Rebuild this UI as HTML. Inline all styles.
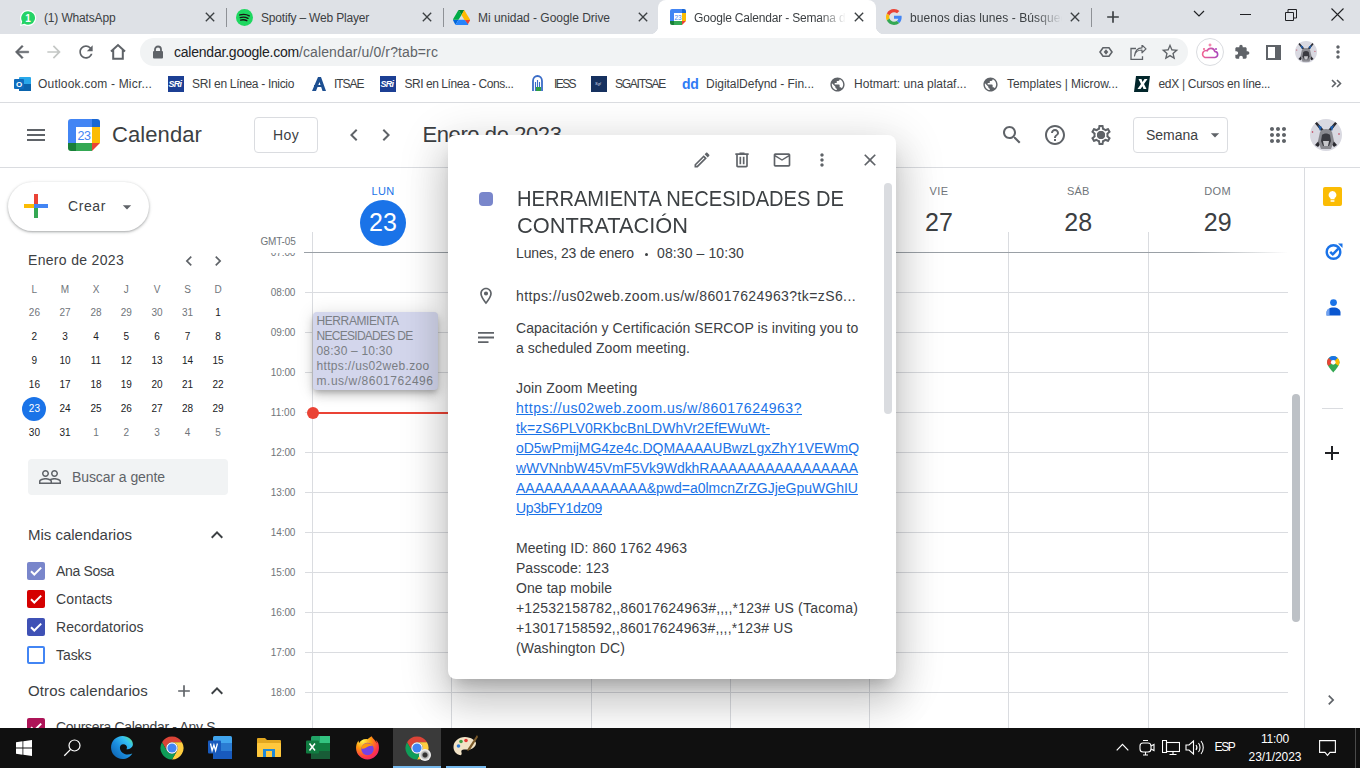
<!DOCTYPE html>
<html><head><meta charset="utf-8">
<style>
*{box-sizing:border-box;margin:0;padding:0}
html,body{width:1360px;height:768px;overflow:hidden;background:#fff;font-family:"Liberation Sans",sans-serif;color:#3c4043}
.a{position:absolute}
.t{position:absolute;line-height:1;white-space:nowrap}
svg.a{display:block}
</style></head><body>
<div class="a" style="left:0px;top:0px;width:1360px;height:34px;background:#dee1e6"></div>
<div class="a" style="left:650px;top:0;width:234px;height:34px;overflow:hidden"><div class="a" style="left:8px;top:0;width:218px;height:34px;background:#fff;border-radius:8px 8px 0 0"></div><div class="a" style="left:0;top:26px;width:8px;height:8px;background:radial-gradient(circle at 0 0,transparent 8px,#fff 8.5px)"></div><div class="a" style="left:226px;top:26px;width:8px;height:8px;background:radial-gradient(circle at 8px 0,transparent 8px,#fff 8.5px)"></div></div>
<div class="a" style="left:225.5px;top:8px;width:1px;height:19px;background:#8e9196"></div>
<div class="a" style="left:442.5px;top:8px;width:1px;height:19px;background:#8e9196"></div>
<div class="a" style="left:1090.5px;top:8px;width:1px;height:19px;background:#8e9196"></div>
<svg class="a" style="left:19px;top:9px" width="18" height="18" viewBox="0 0 18 18"><path fill="#fff" d="M9 1a8 8 0 0 0-6.9 12L1 17l4.1-1.1A8 8 0 1 0 9 1z"/><path fill="#25d366" d="M9 2.2a6.8 6.8 0 0 0-5.8 10.3l-.8 3 3.1-.8A6.8 6.8 0 1 0 9 2.2z"/><text x="9" y="13" font-size="10" font-weight="700" fill="#fff" text-anchor="middle" font-family="Liberation Sans">1</text></svg>
<svg class="a" style="left:236px;top:9px" width="17" height="17" viewBox="0 0 16 16"><circle cx="8" cy="8" r="8" fill="#1ed760"/><path d="M3.6 5.6c3-.9 6.3-.6 8.9.8M4 8.1c2.5-.7 5.2-.4 7.3.7M4.4 10.4c2-.5 4.1-.3 5.8.6" stroke="#191414" stroke-width="1.3" fill="none" stroke-linecap="round"/></svg>
<svg class="a" style="left:453px;top:10px" width="17" height="15" viewBox="0 0 17 15"><path fill="#0066da" d="M1.3 12.8l.7 1.3c.2.3.4.5.6.7L5.5 9.7H0c0 .4.1.7.3 1z"/><path fill="#00ac47" d="M8.5 5L5.6 0c-.3.2-.5.4-.6.7L.3 8.7C.1 9 0 9.3 0 9.7h5.5z"/><path fill="#ea4335" d="M14.4 14.8c.3-.2.5-.4.6-.7l.3-.6 1.6-2.7c.2-.3.3-.7.3-1h-5.5l1.2 2.3z"/><path fill="#00832d" d="M8.5 5L11.4 0c-.3-.2-.6-.2-1-.2H6.6c-.4 0-.7.1-1 .2z"/><path fill="#2684fc" d="M11.5 9.7h-6l-2.9 5c.3.2.6.2 1 .2h10.8c.4 0 .7-.1 1-.2z"/><path fill="#ffba00" d="M14.4 5.3l-2.7-4.6c-.2-.3-.4-.5-.6-.7L8.5 5l3 5h5.5c0-.4-.1-.7-.3-1z"/></svg>
<svg class="a" style="left:670px;top:9px" width="16" height="16" viewBox="0 0 16 16"><path fill="#4285f4" d="M0 2a2 2 0 0 1 2-2h10v4H4v8H0z"/><path fill="#1967d2" d="M12 0h2a2 2 0 0 1 2 2v2h-4z"/><path fill="#fbbc04" d="M12 4h4v8h-4z"/><path fill="#34a853" d="M4 12h8v4H4z"/><path fill="#188038" d="M0 12h4v4H2a2 2 0 0 1-2-2z"/><path fill="#ea4335" d="M12 12h4l-4 4z"/><rect x="4" y="4" width="8" height="8" fill="#fff"/><text x="8" y="10.6" font-size="6.5" fill="#4285f4" text-anchor="middle" font-family="Liberation Sans">23</text></svg>
<svg class="a" style="left:886px;top:9px" width="16" height="16" viewBox="0 0 48 48"><path fill="#EA4335" d="M24 9.5c3.54 0 6.71 1.22 9.21 3.6l6.85-6.85C35.9 2.38 30.47 0 24 0 14.62 0 6.51 5.38 2.56 13.22l7.98 6.19C12.43 13.72 17.74 9.5 24 9.5z"/><path fill="#4285F4" d="M46.98 24.55c0-1.57-.15-3.09-.38-4.55H24v9.02h12.94c-.58 2.96-2.26 5.48-4.78 7.18l7.73 6c4.51-4.18 7.09-10.36 7.09-17.65z"/><path fill="#FBBC05" d="M10.53 28.59c-.48-1.45-.76-2.99-.76-4.59s.27-3.14.76-4.59l-7.98-6.19C.92 16.46 0 20.12 0 24c0 3.88.92 7.54 2.56 10.78l7.97-6.19z"/><path fill="#34A853" d="M24 48c6.48 0 11.93-2.13 15.89-5.81l-7.73-6c-2.15 1.45-4.92 2.3-8.16 2.3-6.26 0-11.57-4.22-13.47-9.91l-7.98 6.19C6.51 42.62 14.62 48 24 48z"/></svg>
<div class="t" style="left:44.00px;top:11.54px;font-size:12px;color:#3c4043;letter-spacing:-0.155px;">(1) WhatsApp</div>
<div class="t" style="left:261.00px;top:11.54px;font-size:12px;color:#3c4043;letter-spacing:-0.192px;">Spotify – Web Player</div>
<div class="t" style="left:478.00px;top:11.54px;font-size:12px;color:#3c4043;letter-spacing:-0.030px;">Mi unidad - Google Drive</div>
<div class="a" style="left:694px;top:8px;width:152px;height:20px;overflow:hidden;-webkit-mask-image:linear-gradient(90deg,#000 125px,transparent 152px)">
<div class="t" style="left:0.00px;top:3.54px;font-size:12px;color:#3c4043;letter-spacing:-0.177px;">Google Calendar - Semana de</div>
</div>
<div class="a" style="left:910px;top:8px;width:152px;height:20px;overflow:hidden;-webkit-mask-image:linear-gradient(90deg,#000 125px,transparent 152px)">
<div class="t" style="left:0.00px;top:3.54px;font-size:12px;color:#3c4043;letter-spacing:0.091px;">buenos dias lunes - Búsqueda</div>
</div>
<svg class="a" style="left:202.0px;top:9.0px;" width="16" height="16" viewBox="0 0 24 24"><path fill="#3c4043" d="M19 6.41L17.59 5 12 10.59 6.41 5 5 6.41 10.59 12 5 17.59 6.41 19 12 13.41 17.59 19 19 17.59 13.41 12z"/></svg>
<svg class="a" style="left:418.5px;top:9.0px;" width="16" height="16" viewBox="0 0 24 24"><path fill="#3c4043" d="M19 6.41L17.59 5 12 10.59 6.41 5 5 6.41 10.59 12 5 17.59 6.41 19 12 13.41 17.59 19 19 17.59 13.41 12z"/></svg>
<svg class="a" style="left:635.0px;top:9.0px;" width="16" height="16" viewBox="0 0 24 24"><path fill="#3c4043" d="M19 6.41L17.59 5 12 10.59 6.41 5 5 6.41 10.59 12 5 17.59 6.41 19 12 13.41 17.59 19 19 17.59 13.41 12z"/></svg>
<svg class="a" style="left:850.5px;top:9.0px;" width="16" height="16" viewBox="0 0 24 24"><path fill="#3c4043" d="M19 6.41L17.59 5 12 10.59 6.41 5 5 6.41 10.59 12 5 17.59 6.41 19 12 13.41 17.59 19 19 17.59 13.41 12z"/></svg>
<svg class="a" style="left:1067.0px;top:9.0px;" width="16" height="16" viewBox="0 0 24 24"><path fill="#3c4043" d="M19 6.41L17.59 5 12 10.59 6.41 5 5 6.41 10.59 12 5 17.59 6.41 19 12 13.41 17.59 19 19 17.59 13.41 12z"/></svg>
<svg class="a" style="left:1103.0px;top:7.0px;" width="20" height="20" viewBox="0 0 24 24"><path fill="#3c4043" d="M19 13h-6v6h-2v-6H5v-2h6V5h2v6h6v2z"/></svg>
<svg class="a" style="left:1193px;top:10px" width="12" height="8" viewBox="0 0 12 8"><path d="M1 1l5 5 5-5" stroke="#202124" stroke-width="1.2" fill="none"/></svg>
<div class="a" style="left:1240px;top:14px;width:11px;height:1px;background:#202124"></div>
<svg class="a" style="left:1285px;top:9px" width="12" height="12" viewBox="0 0 12 12"><path d="M.5 3.5h8v8h-8zM3 3.5V.5h8.5V9H8.5" stroke="#202124" stroke-width="1" fill="none"/></svg>
<svg class="a" style="left:1331px;top:8px" width="13" height="13" viewBox="0 0 13 13"><path d="M.5.5l12 12M12.5.5l-12 12" stroke="#202124" stroke-width="1.1" fill="none"/></svg>
<div class="a" style="left:0px;top:34px;width:1360px;height:34px;background:#fff"></div>
<svg class="a" style="left:12.0px;top:42.0px;overflow:visible" width="20" height="20" viewBox="0 0 24 24"><path stroke="#5f6368" stroke-width=".6" fill="#5f6368" d="M20 11H7.83l5.59-5.59L12 4l-8 8 8 8 1.41-1.41L7.83 13H20v-2z"/></svg>
<svg class="a" style="left:44.0px;top:42.0px;" width="20" height="20" viewBox="0 0 24 24"><path fill="#c4c7c5" d="M12 4l-1.41 1.41L16.17 11H4v2h12.17l-5.58 5.59L12 20l8-8z"/></svg>
<svg class="a" style="left:76.0px;top:42.0px;" width="20" height="20" viewBox="0 0 24 24"><path fill="#5f6368" d="M17.65 6.35C16.2 4.9 14.21 4 12 4c-4.42 0-7.99 3.58-7.99 8s3.57 8 7.99 8c3.73 0 6.84-2.55 7.73-6h-2.08c-.82 2.33-3.04 4-5.65 4-3.31 0-6-2.69-6-6s2.69-6 6-6c1.66 0 3.14.69 4.22 1.78L13 11h7V4l-2.35 2.35z"/></svg>
<svg class="a" style="left:109px;top:43px" width="18" height="18" viewBox="0 0 18 18"><path d="M2 8.6L9 2l7 6.6M4.2 6.8v9h9.6v-9" stroke="#5f6368" stroke-width="2" fill="none" stroke-linejoin="miter"/></svg>
<div class="a" style="left:140px;top:38px;width:1048px;height:28px;background:#f1f3f4;border-radius:14px"></div>
<svg class="a" style="left:152px;top:45px" width="12" height="14" viewBox="0 0 12 14"><path d="M3 6V4.5a3 3 0 0 1 6 0V6" stroke="#5f6368" stroke-width="1.8" fill="none"/><rect x="1" y="6" width="10" height="7.5" rx="1" fill="#5f6368"/></svg>
<div class="a" style="left:174px;top:0">
<div class="t" style="left:0.00px;top:45.15px;font-size:14px;color:#202124;letter-spacing:-0.221px;">calendar.google.com</div>
<div class="t" style="left:125.00px;top:45.15px;font-size:14px;color:#5f6368;letter-spacing:0.110px;">/calendar/u/0/r?tab=rc</div>
</div>
<svg class="a" style="left:1099px;top:47px" width="14" height="10" viewBox="0 0 14 10"><path d="M4 .8h6L13 5l-3 4.2H4L1 5z" stroke="#5f6368" stroke-width="1.6" fill="none"/><path d="M7 2.2L9.3 5 7 7.8 4.7 5z" fill="#5f6368"/></svg>
<svg class="a" style="left:1130px;top:45px" width="17" height="15" viewBox="0 0 17 15"><path d="M6 3.5H1v10.8h11.5v-3" stroke="#5f6368" stroke-width="1.3" fill="none"/><path d="M4.5 11c.6-3.8 3.3-6 7.5-6v2.8l4-3.9-4-3.9v2.8C7.8 2.8 5 6 4.5 11z" stroke="#5f6368" stroke-width="1.2" fill="none" stroke-linejoin="round"/></svg>
<svg class="a" style="left:1160.0px;top:42.0px;" width="20" height="20" viewBox="0 0 24 24"><path fill="#5f6368" d="M22 9.24l-7.19-.62L12 2 9.19 8.63 2 9.24l5.46 4.73L5.82 21 12 17.27 18.18 21l-1.63-7.03L22 9.24zM12 15.4l-3.76 2.27 1-4.28-3.32-2.88 4.38-.38L12 6.1l1.71 4.04 4.38.38-3.32 2.88 1 4.28L12 15.4z"/></svg>
<div class="a" style="left:1196px;top:38px;width:28px;height:28px;border-radius:50%;border:1px solid #dadce0;background:#fff"></div>
<svg class="a" style="left:1201px;top:43px" width="18" height="18" viewBox="0 0 18 18"><defs><linearGradient id="pg" x1="0" x2="1"><stop offset="0" stop-color="#f06292"/><stop offset="1" stop-color="#ab47bc"/></linearGradient></defs><path d="M4 14.5h9.5a3 3 0 0 0 .3-6 4 4 0 0 0-7.6-.7A3.4 3.4 0 0 0 4 14.5z" stroke="url(#pg)" stroke-width="1.6" fill="none"/><circle cx="9" cy="2" r="1" stroke="#f06292" fill="none"/><circle cx="3" cy="6" r="1" fill="#f06292"/><circle cx="15" cy="6" r="1" fill="#ab47bc"/></svg>
<svg class="a" style="left:1234.0px;top:44.0px;" width="16" height="16" viewBox="0 0 24 24"><path fill="#5f6368" d="M20.5 11H19V7c0-1.1-.9-2-2-2h-4V3.5C13 2.12 11.88 1 10.5 1S8 2.12 8 3.5V5H4c-1.1 0-1.99.9-1.99 2v3.8H3.5c1.49 0 2.7 1.21 2.7 2.7s-1.21 2.7-2.7 2.7H2V20c0 1.1.9 2 2 2h3.8v-1.5c0-1.49 1.21-2.7 2.7-2.7 1.49 0 2.7 1.21 2.7 2.7V22H17c1.1 0 2-.9 2-2v-4h1.5c1.38 0 2.5-1.12 2.5-2.5S21.88 11 20.5 11z"/></svg>
<svg class="a" style="left:1266px;top:45px" width="15" height="15" viewBox="0 0 15 15"><rect x="1" y="1" width="13" height="13" stroke="#5f6368" stroke-width="2" fill="none"/><rect x="9" y="1" width="5" height="13" fill="#5f6368"/></svg>
<svg class="a" style="left:1295px;top:41px" width="22" height="22" viewBox="0 0 32 32"><defs><clipPath id="avc1295"><circle cx="16" cy="16" r="16"/></clipPath></defs><g clip-path="url(#avc1295)"><rect width="32" height="32" fill="#d9d9e1"/><path d="M3 2l3 0 21 24-3 2zM29 2l-3 0-21 24 3 2z" fill="#2a2a30"/><path d="M8 6l4 2-2 4zM24 6l-4 2 2 4z" fill="#1f5fb0"/><path d="M10 13c2-4 10-4 12 0l2 9-3 8h-10l-3-8z" fill="#8a8a90"/><path d="M12 16c2-2 6-2 8 0l1 6-2 5h-6l-2-5z" fill="#3a3a40"/><path d="M13 22h6l-1 5h-4z" fill="#c8c8cc"/><circle cx="2.5" cy="13" r=".8" fill="#c0304a"/><circle cx="29" cy="15" r=".8" fill="#c0304a"/></g></svg>
<svg class="a" style="left:1328.0px;top:42.0px;" width="20" height="20" viewBox="0 0 24 24"><path fill="#5f6368" d="M12 8c1.1 0 2-.9 2-2s-.9-2-2-2-2 .9-2 2 .9 2 2 2zm0 2c-1.1 0-2 .9-2 2s.9 2 2 2 2-.9 2-2-.9-2-2-2zm0 6c-1.1 0-2 .9-2 2s.9 2 2 2 2-.9 2-2-.9-2-2-2z"/></svg>
<div class="a" style="left:0px;top:68px;width:1360px;height:34px;background:#fff"></div>
<div class="a" style="left:0px;top:102px;width:1360px;height:1px;background:#dadce0"></div>
<svg class="a" style="left:14px;top:76px" width="17" height="16" viewBox="0 0 17 16"><rect x="5" y="1" width="12" height="14" rx="1" fill="#28a8ea"/><rect x="5" y="8" width="12" height="7" fill="#0a64ad"/><rect x="0" y="3" width="10" height="10" rx="1" fill="#0f6cbd"/><text x="5" y="11.3" font-size="8" font-weight="700" fill="#fff" text-anchor="middle" font-family="Liberation Sans">O</text></svg>
<div class="t" style="left:38.00px;top:77.84px;font-size:12px;color:#3c4043;letter-spacing:0.189px;">Outlook.com - Micr...</div>
<div class="a" style="left:168px;top:76px;width:16px;height:16px;background:#1c3f94"></div><div class="t" style="left:168.5px;top:79.5px;font-size:9px;font-weight:700;font-style:italic;color:#fff;letter-spacing:-.8px">SRi</div>
<div class="t" style="left:192.00px;top:77.84px;font-size:12px;color:#3c4043;letter-spacing:-0.320px;">SRI en Línea - Inicio</div>
<svg class="a" style="left:311px;top:76px" width="16" height="16" viewBox="0 0 16 16"><path d="M1 15L7 1h3l5 14h-3.5L8.5 6 5 15z" fill="#1d4f91"/><path d="M3 10h9" stroke="#1d4f91" stroke-width="2"/></svg>
<div class="t" style="left:334.00px;top:77.84px;font-size:12px;color:#3c4043;letter-spacing:-1.035px;">ITSAE</div>
<div class="a" style="left:380px;top:76px;width:16px;height:16px;background:#1c3f94"></div><div class="t" style="left:380.5px;top:79.5px;font-size:9px;font-weight:700;font-style:italic;color:#fff;letter-spacing:-.8px">SRi</div>
<div class="t" style="left:404.40px;top:77.84px;font-size:12px;color:#3c4043;letter-spacing:-0.442px;">SRI en Línea - Cons...</div>
<svg class="a" style="left:530px;top:75px" width="15" height="17" viewBox="0 0 15 17"><path d="M3 16V6c0-3 2-5 4.5-5S12 3 12 6v10" stroke="#3a6cc7" stroke-width="1.8" fill="none"/><path d="M5.5 16V7M7.5 16V5M9.5 16V7" stroke="#3a6cc7" stroke-width="1.1"/><rect x="6" y="12" width="5" height="4" fill="#2e9e44"/></svg>
<div class="t" style="left:554.00px;top:77.84px;font-size:12px;color:#3c4043;letter-spacing:-1.586px;">IESS</div>
<div class="a" style="left:591px;top:76px;width:16px;height:16px;background:#16315f"></div>
<div class="t" style="left:595px;top:82px;font-size:4px;color:#cfd8e8;font-style:italic">Sgl</div>
<div class="t" style="left:615.00px;top:77.84px;font-size:12px;color:#3c4043;letter-spacing:-1.252px;">SGAITSAE</div>
<div class="t" style="left:682px;top:77px;font-size:14px;font-weight:700;color:#2f7bf5;letter-spacing:-.3px">dd</div>
<div class="t" style="left:706.00px;top:77.84px;font-size:12px;color:#3c4043;letter-spacing:-0.032px;">DigitalDefynd - Fin...</div>
<svg class="a" style="left:829.0px;top:75.5px;" width="17" height="17" viewBox="0 0 24 24"><path fill="#5f6368" d="M12 2C6.48 2 2 6.48 2 12s4.48 10 10 10 10-4.480 10-10S17.52 2 12 2zm-1 17.93c-3.95-.49-7-3.85-7-7.93 0-.62.08-1.21.21-1.79L9 15v1c0 1.1.9 2 2 2v1.93zm6.9-2.54c-.26-.81-1-1.39-1.9-1.39h-1v-3c0-.55-.45-1-1-1H8v-2h2c.55 0 1-.45 1-1V7h2c1.1 0 2-.9 2-2v-.41c2.93 1.19 5 4.06 5 7.41 0 2.08-.8 3.97-2.1 5.39z"/></svg>
<div class="t" style="left:854.00px;top:77.84px;font-size:12px;color:#3c4043;letter-spacing:0.020px;">Hotmart: una plataf...</div>
<svg class="a" style="left:982.0px;top:75.5px;" width="17" height="17" viewBox="0 0 24 24"><path fill="#5f6368" d="M12 2C6.48 2 2 6.48 2 12s4.48 10 10 10 10-4.480 10-10S17.52 2 12 2zm-1 17.93c-3.95-.49-7-3.85-7-7.93 0-.62.08-1.21.21-1.79L9 15v1c0 1.1.9 2 2 2v1.93zm6.9-2.54c-.26-.81-1-1.39-1.9-1.39h-1v-3c0-.55-.45-1-1-1H8v-2h2c.55 0 1-.45 1-1V7h2c1.1 0 2-.9 2-2v-.41c2.93 1.19 5 4.06 5 7.41 0 2.08-.8 3.97-2.1 5.39z"/></svg>
<div class="t" style="left:1007.00px;top:77.84px;font-size:12px;color:#3c4043;letter-spacing:-0.039px;">Templates | Microw...</div>
<svg class="a" style="left:1134px;top:76px" width="16" height="16" viewBox="0 0 16 16"><path d="M2 0h14l-2 16H0z" fill="#02262b"/><path d="M4.5 3h3l1 3 2-3h3l-3.5 5 2.5 5h-3l-1-2.8L6.5 13h-3L7 8z" fill="#fff"/></svg>
<div class="t" style="left:1158.50px;top:77.84px;font-size:12px;color:#3c4043;letter-spacing:-0.305px;">edX | Cursos en líne...</div>
<svg class="a" style="left:1331px;top:79px" width="11" height="9" viewBox="0 0 11 9"><path d="M1 1l3.5 3.5L1 8M6 1l3.5 3.5L6 8" stroke="#5f6368" stroke-width="1.6" fill="none"/></svg>
<div class="a" style="left:0;top:103px;width:1360px;height:625px;overflow:hidden"><div class="a" style="left:0;top:-103px;width:1360px;height:768px">
<div class="a" style="left:0px;top:167px;width:1360px;height:1px;background:#dadce0"></div>
<svg class="a" style="left:24.0px;top:123.0px;" width="24" height="24" viewBox="0 0 24 24"><path fill="#5f6368" d="M3 18h18v-2H3v2zm0-5h18v-2H3v2zm0-7v2h18V6H3z"/></svg>
<svg class="a" style="left:68px;top:119px" width="32" height="32" viewBox="0 0 32 32"><path fill="#4285f4" d="M0 3a3 3 0 0 1 3-3h21v8H8v16H0z"/><path fill="#1967d2" d="M24 0h5a3 3 0 0 1 3 3v5h-8z"/><path fill="#fbbc04" d="M24 8h8v16h-8z"/><path fill="#34a853" d="M8 24h16v8H8z"/><path fill="#188038" d="M0 24h8v8H3a3 3 0 0 1-3-3z"/><path fill="#ea4335" d="M24 24h8l-8 8z"/><rect x="8" y="8" width="16" height="16" fill="#fff"/><text x="16" y="21" font-size="12.5" fill="#4285f4" text-anchor="middle" font-family="Liberation Sans" letter-spacing="-.5">23</text></svg>
<div class="t" style="left:112.00px;top:124.38px;font-size:22px;color:#3c4043;letter-spacing:0.090px;">Calendar</div>
<div class="a" style="left:254px;top:117px;width:64px;height:36px;border:1px solid #dadce0;border-radius:4px;background:#fff"></div>
<div class="t" style="left:273.00px;top:128.15px;font-size:14px;color:#3c4043;letter-spacing:0.368px;">Hoy</div>
<svg class="a" style="left:342.0px;top:123.0px;" width="24" height="24" viewBox="0 0 24 24"><path fill="#5f6368" d="M15.41 7.41L14 6l-6 6 6 6 1.41-1.41L10.83 12z"/></svg>
<svg class="a" style="left:374.0px;top:123.0px;" width="24" height="24" viewBox="0 0 24 24"><path fill="#5f6368" d="M10 6L8.59 7.41 13.17 12l-4.58 4.59L10 18l6-6z"/></svg>
<div class="t" style="left:422.50px;top:123.88px;font-size:22px;color:#3c4043;letter-spacing:-0.411px;">Enero de 2023</div>
<svg class="a" style="left:1000.0px;top:123.0px;" width="24" height="24" viewBox="0 0 24 24"><path fill="#5f6368" d="M15.5 14h-.79l-.28-.27C15.41 12.59 16 11.11 16 9.5 16 5.91 13.09 3 9.5 3S3 5.91 3 9.5 5.91 16 9.5 16c1.61 0 3.090-.59 4.23-1.57l.27.28v.79l5 4.99L20.49 19l-4.99-5zm-6 0C7.01 14 5 11.99 5 9.5S7.01 5 9.5 5 14 7.01 14 9.5 11.99 14 9.5 14z"/></svg>
<svg class="a" style="left:1043.0px;top:123.0px;" width="24" height="24" viewBox="0 0 24 24"><path fill="#5f6368" d="M11 18h2v-2h-2v2zm1-16C6.48 2 2 6.48 2 12s4.48 10 10 10 10-4.48 10-10S17.52 2 12 2zm0 18c-4.41 0-8-3.590-8-8s3.590-8 8-8 8 3.590 8 8-3.590 8-8 8zm0-14c-2.21 0-4 1.790-4 4h2c0-1.1.9-2 2-2s2 .9 2 2c0 2-3 1.75-3 5h2c0-2.25 3-2.5 3-5 0-2.21-1.790-4-4-4z"/></svg>
<svg class="a" style="left:1089.0px;top:123.0px;" width="24" height="24" viewBox="0 0 24 24"><path fill="#5f6368" d="M19.43 12.98c.04-.32.07-.64.07-.98 0-.34-.03-.66-.07-.98l2.11-1.65c.19-.15.24-.42.12-.64l-2-3.46c-.09-.16-.26-.25-.44-.25-.06 0-.12.01-.17.03l-2.49 1c-.52-.4-1.08-.73-1.69-.98l-.38-2.65C14.46 2.18 14.25 2 14 2h-4c-.25 0-.46.18-.49.42l-.38 2.65c-.61.25-1.17.59-1.69.98l-2.49-1c-.06-.02-.12-.03-.18-.03-.17 0-.34.09-.43.25l-2 3.46c-.13.22-.07.49.12.64l2.11 1.65c-.04.32-.07.65-.07.98 0 .33.03.66.07.98l-2.11 1.65c-.19.15-.24.42-.12.64l2 3.46c.09.16.26.25.44.25.06 0 .12-.01.17-.03l2.49-1c.52.4 1.08.73 1.69.98l.38 2.65c.03.24.24.42.49.42h4c.25 0 .46-.18.49-.42l.38-2.65c.61-.25 1.17-.59 1.69-.98l2.49 1c.06.02.12.03.18.03.17 0 .34-.09.43-.25l2-3.46c.12-.22.07-.49-.12-.64l-2.11-1.65zm-1.98-1.71c.04.31.05.52.05.73 0 .21-.02.43-.05.73l-.14 1.13.89.7 1.08.84-.7 1.21-1.27-.51-1.04-.42-.9.68c-.43.32-.84.56-1.25.73l-1.06.43-.16 1.13-.2 1.350h-1.4l-.19-1.35-.16-1.13-1.06-.43c-.43-.18-.83-.41-1.23-.71l-.91-.7-1.06.43-1.27.51-.7-1.21 1.08-.84.89-.7-.14-1.13c-.03-.31-.05-.54-.05-.74s.02-.43.05-.73l.14-1.13-.89-.7-1.08-.84.7-1.21 1.27.51 1.04.42.9-.68c.43-.32.84-.56 1.25-.73l1.06-.43.16-1.13.2-1.35h1.39l.19 1.35.16 1.13 1.06.43c.43.18.83.41 1.23.71l.91.7 1.06-.43 1.27-.51.7 1.21-1.07.85-.89.7.14 1.13zM12 8c-2.21 0-4 1.79-4 4s1.79 4 4 4 4-1.79 4-4-1.79-4-4-4zm0 6c-1.1 0-2-.9-2-2s.9-2 2-2 2 .9 2 2-.9 2-2 2z"/></svg>
<div class="a" style="left:1097px;top:131px;width:8px;height:8px;border-radius:50%;background:#5f6368"></div>
<div class="a" style="left:1133px;top:117px;width:95px;height:36px;border:1px solid #dadce0;border-radius:4px;background:#fff"></div>
<div class="t" style="left:1146.00px;top:128.15px;font-size:14px;color:#3c4043;letter-spacing:-0.024px;">Semana</div>
<svg class="a" style="left:1205.0px;top:125.0px;" width="20" height="20" viewBox="0 0 24 24"><path fill="#5f6368" d="M7 10l5 5 5-5z"/></svg>
<svg class="a" style="left:1266.0px;top:123.0px;" width="24" height="24" viewBox="0 0 24 24"><path fill="#5f6368" d="M6 8c1.1 0 2-.9 2-2s-.9-2-2-2-2 .9-2 2 .9 2 2 2zm6 12c1.1 0 2-.9 2-2s-.9-2-2-2-2 .9-2 2 .9 2 2 2zm-6 0c1.1 0 2-.9 2-2s-.9-2-2-2-2 .9-2 2 .9 2 2 2zm0-6c1.1 0 2-.9 2-2s-.9-2-2-2-2 .9-2 2 .9 2 2 2zm6 0c1.1 0 2-.9 2-2s-.9-2-2-2-2 .9-2 2 .9 2 2 2zm4-8c0 1.1.9 2 2 2s2-.9 2-2-.9-2-2-2-2 .9-2 2zm-4 2c1.1 0 2-.9 2-2s-.9-2-2-2-2 .9-2 2 .9 2 2 2zm6 6c1.1 0 2-.9 2-2s-.9-2-2-2-2 .9-2 2 .9 2 2 2zm0 6c1.1 0 2-.9 2-2s-.9-2-2-2-2 .9-2 2 .9 2 2 2z"/></svg>
<svg class="a" style="left:1310px;top:119px" width="32" height="32" viewBox="0 0 32 32"><defs><clipPath id="avc1310"><circle cx="16" cy="16" r="16"/></clipPath></defs><g clip-path="url(#avc1310)"><rect width="32" height="32" fill="#d9d9e1"/><path d="M3 2l3 0 21 24-3 2zM29 2l-3 0-21 24 3 2z" fill="#2a2a30"/><path d="M8 6l4 2-2 4zM24 6l-4 2 2 4z" fill="#1f5fb0"/><path d="M10 13c2-4 10-4 12 0l2 9-3 8h-10l-3-8z" fill="#8a8a90"/><path d="M12 16c2-2 6-2 8 0l1 6-2 5h-6l-2-5z" fill="#3a3a40"/><path d="M13 22h6l-1 5h-4z" fill="#c8c8cc"/><circle cx="2.5" cy="13" r=".8" fill="#c0304a"/><circle cx="29" cy="15" r=".8" fill="#c0304a"/></g></svg>
<div class="a" style="left:8px;top:182px;width:141px;height:49px;border-radius:25px;background:#fff;box-shadow:0 1px 2px 0 rgba(60,64,67,.3),0 1px 3px 1px rgba(60,64,67,.15)"></div>
<svg class="a" style="left:24px;top:194px" width="24" height="24" viewBox="0 0 24 24"><path fill="#34a853" d="M10 14h4v10h-4z"/><path fill="#4285f4" d="M14 10h10v4H14z"/><path fill="#fbbc04" d="M0 10h10v4H0z"/><path fill="#ea4335" d="M10 0h4v10h-4z"/><path fill="#4285f4" d="M10 10h4v4h-4z"/></svg>
<div class="t" style="left:68.00px;top:199.15px;font-size:14px;color:#3c4043;letter-spacing:0.599px;">Crear</div>
<svg class="a" style="left:117.0px;top:197.0px;" width="20" height="20" viewBox="0 0 24 24"><path fill="#5f6368" d="M7 10l5 5 5-5z"/></svg>
<div class="t" style="left:28.00px;top:253.15px;font-size:14px;color:#3c4043;letter-spacing:0.319px;">Enero de 2023</div>
<svg class="a" style="left:179.0px;top:250.5px;" width="20" height="20" viewBox="0 0 24 24"><path fill="#5f6368" d="M15.41 7.41L14 6l-6 6 6 6 1.41-1.41L10.83 12z"/></svg>
<svg class="a" style="left:208.0px;top:250.5px;" width="20" height="20" viewBox="0 0 24 24"><path fill="#5f6368" d="M10 6L8.59 7.41 13.17 12l-4.58 4.59L10 18l6-6z"/></svg>
<div class="t" style="left:31.62px;top:284.54px;font-size:10px;color:#70757a;">L</div>
<div class="t" style="left:60.83px;top:284.54px;font-size:10px;color:#70757a;">M</div>
<div class="t" style="left:92.67px;top:284.54px;font-size:10px;color:#70757a;">X</div>
<div class="t" style="left:123.80px;top:284.54px;font-size:10px;color:#70757a;">J</div>
<div class="t" style="left:153.67px;top:284.54px;font-size:10px;color:#70757a;">V</div>
<div class="t" style="left:184.17px;top:284.54px;font-size:10px;color:#70757a;">S</div>
<div class="t" style="left:214.39px;top:284.54px;font-size:10px;color:#70757a;">D</div>
<div class="t" style="left:28.84px;top:307.64px;font-size:10px;color:#70757a;">26</div>
<div class="t" style="left:59.44px;top:307.64px;font-size:10px;color:#70757a;">27</div>
<div class="t" style="left:90.44px;top:307.64px;font-size:10px;color:#70757a;">28</div>
<div class="t" style="left:120.74px;top:307.64px;font-size:10px;color:#70757a;">29</div>
<div class="t" style="left:151.44px;top:307.64px;font-size:10px;color:#70757a;">30</div>
<div class="t" style="left:181.94px;top:307.64px;font-size:10px;color:#70757a;">31</div>
<div class="t" style="left:215.22px;top:307.64px;font-size:10px;color:#202124;">1</div>
<div class="t" style="left:31.62px;top:331.64px;font-size:10px;color:#202124;">2</div>
<div class="t" style="left:62.22px;top:331.64px;font-size:10px;color:#202124;">3</div>
<div class="t" style="left:93.22px;top:331.64px;font-size:10px;color:#202124;">4</div>
<div class="t" style="left:123.52px;top:331.64px;font-size:10px;color:#202124;">5</div>
<div class="t" style="left:154.22px;top:331.64px;font-size:10px;color:#202124;">6</div>
<div class="t" style="left:184.72px;top:331.64px;font-size:10px;color:#202124;">7</div>
<div class="t" style="left:215.22px;top:331.64px;font-size:10px;color:#202124;">8</div>
<div class="t" style="left:31.62px;top:355.64px;font-size:10px;color:#202124;">9</div>
<div class="t" style="left:59.44px;top:355.64px;font-size:10px;color:#202124;">10</div>
<div class="t" style="left:90.81px;top:355.64px;font-size:10px;color:#202124;">11</div>
<div class="t" style="left:120.74px;top:355.64px;font-size:10px;color:#202124;">12</div>
<div class="t" style="left:151.44px;top:355.64px;font-size:10px;color:#202124;">13</div>
<div class="t" style="left:181.94px;top:355.64px;font-size:10px;color:#202124;">14</div>
<div class="t" style="left:212.44px;top:355.64px;font-size:10px;color:#202124;">15</div>
<div class="t" style="left:28.84px;top:379.64px;font-size:10px;color:#202124;">16</div>
<div class="t" style="left:59.44px;top:379.64px;font-size:10px;color:#202124;">17</div>
<div class="t" style="left:90.44px;top:379.64px;font-size:10px;color:#202124;">18</div>
<div class="t" style="left:120.74px;top:379.64px;font-size:10px;color:#202124;">19</div>
<div class="t" style="left:151.44px;top:379.64px;font-size:10px;color:#202124;">20</div>
<div class="t" style="left:181.94px;top:379.64px;font-size:10px;color:#202124;">21</div>
<div class="t" style="left:212.44px;top:379.64px;font-size:10px;color:#202124;">22</div>
<div class="a" style="left:22px;top:396.5px;width:24px;height:24px;border-radius:50%;background:#1a73e8"></div>
<div class="t" style="left:28.84px;top:403.64px;font-size:10px;color:#fff;">23</div>
<div class="t" style="left:59.44px;top:403.64px;font-size:10px;color:#202124;">24</div>
<div class="t" style="left:90.44px;top:403.64px;font-size:10px;color:#202124;">25</div>
<div class="t" style="left:120.74px;top:403.64px;font-size:10px;color:#202124;">26</div>
<div class="t" style="left:151.44px;top:403.64px;font-size:10px;color:#202124;">27</div>
<div class="t" style="left:181.94px;top:403.64px;font-size:10px;color:#202124;">28</div>
<div class="t" style="left:212.44px;top:403.64px;font-size:10px;color:#202124;">29</div>
<div class="t" style="left:28.84px;top:427.64px;font-size:10px;color:#202124;">30</div>
<div class="t" style="left:59.44px;top:427.64px;font-size:10px;color:#202124;">31</div>
<div class="t" style="left:93.22px;top:427.64px;font-size:10px;color:#70757a;">1</div>
<div class="t" style="left:123.52px;top:427.64px;font-size:10px;color:#70757a;">2</div>
<div class="t" style="left:154.22px;top:427.64px;font-size:10px;color:#70757a;">3</div>
<div class="t" style="left:184.72px;top:427.64px;font-size:10px;color:#70757a;">4</div>
<div class="t" style="left:215.22px;top:427.64px;font-size:10px;color:#70757a;">5</div>
<div class="a" style="left:28px;top:459px;width:200px;height:36px;background:#f1f3f4;border-radius:4px"></div>
<svg class="a" style="left:38.0px;top:465.0px;" width="24" height="24" viewBox="0 0 24 24"><path fill="#5f6368" d="M16.5 13c-1.2 0-3.07.34-4.5 1-1.43-.67-3.3-1-4.5-1C5.33 13 1 14.08 1 16.25V19h22v-2.75c0-2.17-4.33-3.25-6.5-3.25zm-4 4.5h-10v-1.25c0-.54 2.56-1.75 5-1.75s5 1.21 5 1.75v1.25zm9 0H14v-1.25c0-.46-.2-.86-.52-1.22.88-.3 1.96-.53 3.02-.53 2.44 0 5 1.21 5 1.75v1.25zM7.5 12c1.93 0 3.5-1.57 3.5-3.5S9.43 5 7.5 5 4 6.57 4 8.5 5.57 12 7.5 12zm0-5.5c1.1 0 2 .9 2 2s-.9 2-2 2-2-.9-2-2 .9-2 2-2zm9 5.5c1.93 0 3.5-1.57 3.5-3.5S18.43 5 16.5 5 13 6.57 13 8.5s1.57 3.5 3.5 3.5zm0-5.5c1.1 0 2 .9 2 2s-.9 2-2 2-2-.9-2-2 .9-2 2-2z"/></svg>
<div class="t" style="left:72.00px;top:470.15px;font-size:14px;color:#5f6368;letter-spacing:-0.084px;">Buscar a gente</div>
<div class="t" style="left:28.00px;top:527.30px;font-size:15px;color:#3c4043;letter-spacing:-0.014px;">Mis calendarios</div>
<svg class="a" style="left:205.0px;top:523.0px;" width="24" height="24" viewBox="0 0 24 24"><path fill="#3c4043" d="M12 8l-6 6 1.41 1.41L12 10.83l4.59 4.58L18 14z"/></svg>
<div class="a" style="left:27px;top:562px;width:18px;height:18px;border-radius:2px;background:#7986cb"></div>
<svg class="a" style="left:27px;top:562px" width="18" height="18" viewBox="0 0 18 18"><path d="M4 9.2l3.3 3.3L14.2 5.6" stroke="#fff" stroke-width="2" fill="none"/></svg>
<div class="t" style="left:56.00px;top:564.15px;font-size:14px;color:#3c4043;letter-spacing:-0.339px;">Ana Sosa</div>
<div class="a" style="left:27px;top:590px;width:18px;height:18px;border-radius:2px;background:#d50000"></div>
<svg class="a" style="left:27px;top:590px" width="18" height="18" viewBox="0 0 18 18"><path d="M4 9.2l3.3 3.3L14.2 5.6" stroke="#fff" stroke-width="2" fill="none"/></svg>
<div class="t" style="left:56.00px;top:592.15px;font-size:14px;color:#3c4043;letter-spacing:0.156px;">Contacts</div>
<div class="a" style="left:27px;top:618px;width:18px;height:18px;border-radius:2px;background:#3f51b5"></div>
<svg class="a" style="left:27px;top:618px" width="18" height="18" viewBox="0 0 18 18"><path d="M4 9.2l3.3 3.3L14.2 5.6" stroke="#fff" stroke-width="2" fill="none"/></svg>
<div class="t" style="left:56.00px;top:620.15px;font-size:14px;color:#3c4043;letter-spacing:0.027px;">Recordatorios</div>
<div class="a" style="left:27px;top:646px;width:18px;height:18px;border-radius:2px;border:2px solid #4285f4"></div>
<div class="t" style="left:56.00px;top:648.15px;font-size:14px;color:#3c4043;letter-spacing:-0.057px;">Tasks</div>
<div class="t" style="left:28.00px;top:683.30px;font-size:15px;color:#3c4043;letter-spacing:0.144px;">Otros calendarios</div>
<svg class="a" style="left:173.5px;top:681.0px;" width="20" height="20" viewBox="0 0 24 24"><path fill="#5f6368" d="M19 13h-6v6h-2v-6H5v-2h6V5h2v6h6v2z"/></svg>
<svg class="a" style="left:205.0px;top:679.0px;" width="24" height="24" viewBox="0 0 24 24"><path fill="#3c4043" d="M12 8l-6 6 1.41 1.41L12 10.83l4.59 4.58L18 14z"/></svg>
<div class="a" style="left:27px;top:718px;width:18px;height:18px;border-radius:2px;background:#ad1457"></div>
<svg class="a" style="left:27px;top:718px" width="18" height="18" viewBox="0 0 18 18"><path d="M4 9.2l3.3 3.3L14.2 5.6" stroke="#fff" stroke-width="2" fill="none"/></svg>
<div class="t" style="left:56.00px;top:720.15px;font-size:14px;color:#3c4043;letter-spacing:-0.323px;">Coursera Calendar - Any S</div>
<div class="t" style="left:371.50px;top:185.69px;font-size:11px;color:#1a73e8;letter-spacing:0.332px;">LUN</div>
<div class="a" style="left:360px;top:199.5px;width:46px;height:46px;border-radius:50%;background:#1a73e8"></div>
<div class="t" style="left:369.00px;top:210.34px;font-size:25px;color:#fff;letter-spacing:0.096px;">23</div>
<div class="t" style="left:510.00px;top:185.69px;font-size:11px;color:#70757a;letter-spacing:-0.815px;">MAR</div>
<div class="t" style="left:507.00px;top:210.34px;font-size:25px;color:#3c4043;letter-spacing:0.096px;">24</div>
<div class="t" style="left:649.83px;top:185.69px;font-size:11px;color:#70757a;letter-spacing:0.481px;">MIÉ</div>
<div class="t" style="left:646.33px;top:210.34px;font-size:25px;color:#3c4043;letter-spacing:0.096px;">25</div>
<div class="t" style="left:788.67px;top:185.69px;font-size:11px;color:#70757a;letter-spacing:0.406px;">JUE</div>
<div class="t" style="left:785.67px;top:210.34px;font-size:25px;color:#3c4043;letter-spacing:0.096px;">26</div>
<div class="t" style="left:929.50px;top:185.69px;font-size:11px;color:#70757a;letter-spacing:0.423px;">VIE</div>
<div class="t" style="left:925.00px;top:210.34px;font-size:25px;color:#3c4043;letter-spacing:0.096px;">27</div>
<div class="t" style="left:1067.08px;top:185.69px;font-size:11px;color:#70757a;letter-spacing:0.163px;">SÁB</div>
<div class="t" style="left:1064.33px;top:210.34px;font-size:25px;color:#3c4043;letter-spacing:0.096px;">28</div>
<div class="t" style="left:1204.16px;top:185.69px;font-size:11px;color:#70757a;letter-spacing:0.446px;">DOM</div>
<div class="t" style="left:1203.66px;top:210.34px;font-size:25px;color:#3c4043;letter-spacing:0.096px;">29</div>
<div class="t" style="left:260.50px;top:236.53px;font-size:10px;color:#70757a;letter-spacing:-0.186px;">GMT-05</div>
<div class="a" style="left:312px;top:232px;width:1px;height:20px;background:#dadce0"></div>
<div class="a" style="left:451px;top:232px;width:1px;height:20px;background:#dadce0"></div>
<div class="a" style="left:591px;top:232px;width:1px;height:20px;background:#dadce0"></div>
<div class="a" style="left:730px;top:232px;width:1px;height:20px;background:#dadce0"></div>
<div class="a" style="left:869px;top:232px;width:1px;height:20px;background:#dadce0"></div>
<div class="a" style="left:1008px;top:232px;width:1px;height:20px;background:#dadce0"></div>
<div class="a" style="left:1148px;top:232px;width:1px;height:20px;background:#dadce0"></div>
<div class="a" style="left:304px;top:252px;width:984px;height:1px;background:linear-gradient(90deg,#9aa0a6 0,#9aa0a6 90%,rgba(154,160,166,0) 100%)"></div>
<div class="a" style="left:0;top:253px;width:1304px;height:475px;overflow:hidden">
<div class="a" style="left:305px;top:39px;width:983px;height:1px;background:#dadce0"></div>
<div class="a" style="left:305px;top:79px;width:983px;height:1px;background:#dadce0"></div>
<div class="a" style="left:305px;top:119px;width:983px;height:1px;background:#dadce0"></div>
<div class="a" style="left:305px;top:159px;width:983px;height:1px;background:#dadce0"></div>
<div class="a" style="left:305px;top:199px;width:983px;height:1px;background:#dadce0"></div>
<div class="a" style="left:305px;top:239px;width:983px;height:1px;background:#dadce0"></div>
<div class="a" style="left:305px;top:279px;width:983px;height:1px;background:#dadce0"></div>
<div class="a" style="left:305px;top:319px;width:983px;height:1px;background:#dadce0"></div>
<div class="a" style="left:305px;top:359px;width:983px;height:1px;background:#dadce0"></div>
<div class="a" style="left:305px;top:399px;width:983px;height:1px;background:#dadce0"></div>
<div class="a" style="left:305px;top:439px;width:983px;height:1px;background:#dadce0"></div>
<div class="a" style="left:305px;top:479px;width:983px;height:1px;background:#dadce0"></div>
<div class="a" style="left:312px;top:0;width:1px;height:475px;background:#dadce0"></div>
<div class="a" style="left:451px;top:0;width:1px;height:475px;background:#dadce0"></div>
<div class="a" style="left:591px;top:0;width:1px;height:475px;background:#dadce0"></div>
<div class="a" style="left:730px;top:0;width:1px;height:475px;background:#dadce0"></div>
<div class="a" style="left:869px;top:0;width:1px;height:475px;background:#dadce0"></div>
<div class="a" style="left:1008px;top:0;width:1px;height:475px;background:#dadce0"></div>
<div class="a" style="left:1148px;top:0;width:1px;height:475px;background:#dadce0"></div>
<div class="t" style="left:270.80px;top:-5.46px;font-size:10px;color:#70757a;letter-spacing:-0.105px;">07:00</div>
<div class="t" style="left:270.80px;top:34.53px;font-size:10px;color:#70757a;letter-spacing:-0.105px;">08:00</div>
<div class="t" style="left:270.80px;top:74.53px;font-size:10px;color:#70757a;letter-spacing:-0.105px;">09:00</div>
<div class="t" style="left:270.80px;top:114.53px;font-size:10px;color:#70757a;letter-spacing:-0.105px;">10:00</div>
<div class="t" style="left:270.80px;top:154.53px;font-size:10px;color:#70757a;letter-spacing:0.044px;">11:00</div>
<div class="t" style="left:270.80px;top:194.53px;font-size:10px;color:#70757a;letter-spacing:-0.105px;">12:00</div>
<div class="t" style="left:270.80px;top:234.53px;font-size:10px;color:#70757a;letter-spacing:-0.105px;">13:00</div>
<div class="t" style="left:270.80px;top:274.54px;font-size:10px;color:#70757a;letter-spacing:-0.105px;">14:00</div>
<div class="t" style="left:270.80px;top:314.54px;font-size:10px;color:#70757a;letter-spacing:-0.105px;">15:00</div>
<div class="t" style="left:270.80px;top:354.54px;font-size:10px;color:#70757a;letter-spacing:-0.105px;">16:00</div>
<div class="t" style="left:270.80px;top:394.54px;font-size:10px;color:#70757a;letter-spacing:-0.105px;">17:00</div>
<div class="t" style="left:270.80px;top:434.54px;font-size:10px;color:#70757a;letter-spacing:-0.105px;">18:00</div>
<div class="t" style="left:270.80px;top:474.54px;font-size:10px;color:#70757a;letter-spacing:-0.105px;">19:00</div>
</div>
<div class="a" style="left:256px;top:246px;width:48px;height:6px;background:linear-gradient(#fff,rgba(255,255,255,.6))"></div>
<div class="a" style="left:312.5px;top:312px;width:125.5px;height:78px;border-radius:4px;background:#d3d6ec;box-shadow:0 6px 10px 0 rgba(0,0,0,.14),0 1px 18px 0 rgba(0,0,0,.12),0 3px 5px -1px rgba(0,0,0,.2)"></div>
<div class="t" style="left:316.50px;top:315.34px;font-size:12px;color:#7a7e84;letter-spacing:-0.404px;">HERRAMIENTA</div>
<div class="t" style="left:316.50px;top:330.34px;font-size:12px;color:#7a7e84;letter-spacing:-0.716px;">NECESIDADES DE</div>
<div class="t" style="left:316.50px;top:345.34px;font-size:12px;color:#7a7e84;letter-spacing:0.200px;">08:30 – 10:30</div>
<div class="t" style="left:316.50px;top:360.34px;font-size:12px;color:#7a7e84;letter-spacing:0.330px;">https://us02web.zoo</div>
<div class="t" style="left:316.50px;top:375.34px;font-size:12px;color:#7a7e84;letter-spacing:0.525px;">m.us/w/8601762496</div>
<div class="a" style="left:313px;top:412px;width:140px;height:2px;background:#ea4335"></div>
<div class="a" style="left:307px;top:407px;width:12px;height:12px;border-radius:50%;background:#ea4335"></div>
<div class="a" style="left:1292px;top:394px;width:8px;height:228px;background:#bdc1c6;border-radius:4px"></div>
<div class="a" style="left:1304px;top:168px;width:1px;height:560px;background:#dadce0"></div>
<svg class="a" style="left:1323px;top:186.5px" width="19" height="19" viewBox="0 0 19 19"><rect x="0" y="0" width="19" height="19" rx="2" fill="#fbbc04"/><path d="M9.5 4a3.8 3.8 0 0 0-2.1 7v1.3h4.2V11A3.8 3.8 0 0 0 9.5 4zM7.6 13.3h3.8v1.4H7.6z" fill="#fff"/></svg>
<svg class="a" style="left:1324.5px;top:243px" width="18" height="17" viewBox="0 0 18 17"><circle cx="8.5" cy="9" r="6.8" stroke="#1a73e8" stroke-width="2.4" fill="none"/><path d="M5.2 8.8l2.6 2.6 5.5-5.8" stroke="#1a73e8" stroke-width="2.4" fill="none"/><path d="M13 .5h4.5V5z" fill="#1a73e8"/></svg>
<svg class="a" style="left:1325.5px;top:299px" width="15" height="17" viewBox="0 0 15 17"><circle cx="7.5" cy="3.6" r="3.4" fill="#1a73e8"/><path d="M.5 16.5v-3c0-3 3-5 7-5s7 2 7 5v3z" fill="#0b57d0"/><path d="M.5 16.5v-3c0-2 1.2-3.5 3-4.3V16.5z" fill="#8ab4f8" opacity=".8"/></svg>
<svg class="a" style="left:1327px;top:356px" width="12.5" height="16.5" viewBox="0 0 16 21"><path d="M8 0a8 8 0 0 0-8 8c0 5 8 13 8 13s8-8 8-13a8 8 0 0 0-8-8z" fill="#34a853"/><path d="M2.3 2.4A8 8 0 0 1 13.7 2.4L8 8z" fill="#1a73e8"/><path d="M13.7 2.4A8 8 0 0 1 16 8c0 1.5-.6 3-1.4 4.5L8 8z" fill="#fbbc04"/><path d="M0 8a8 8 0 0 1 2.3-5.6L8 8 1.6 12.8A12 12 0 0 1 0 8z" fill="#ea4335"/><circle cx="8" cy="8" r="3" fill="#fff"/></svg>
<div class="a" style="left:1322px;top:408px;width:21px;height:1px;background:#dadce0"></div>
<svg class="a" style="left:1320.0px;top:440.5px;" width="24" height="24" viewBox="0 0 24 24"><path fill="#202124" d="M19 13h-6v6h-2v-6H5v-2h6V5h2v6h6v2z"/></svg>
<svg class="a" style="left:1321.0px;top:689.5px;" width="20" height="20" viewBox="0 0 24 24"><path fill="#5f6368" d="M10 6L8.59 7.41 13.17 12l-4.58 4.59L10 18l6-6z"/></svg>
<div class="a" style="left:448px;top:135px;width:448px;height:544px;border-radius:8px;background:#fff;box-shadow:0 24px 38px 3px rgba(0,0,0,.14),0 9px 46px 8px rgba(0,0,0,.12),0 11px 15px -7px rgba(0,0,0,.2)"></div>
<svg class="a" style="left:692.0px;top:149.5px;" width="20" height="20" viewBox="0 0 24 24"><path fill="#5f6368" d="M14.06 9.02l.92.92L5.92 19H5v-.92l9.06-9.06M17.66 3c-.25 0-.51.1-.7.29l-1.83 1.83 3.75 3.75 1.83-1.83c.39-.39.39-1.02 0-1.41l-2.34-2.34c-.2-.2-.45-.29-.71-.29zm-3.6 3.19L3 17.25V21h3.75L17.81 9.94l-3.75-3.75z"/></svg>
<svg class="a" style="left:732px;top:149.5px;" width="20" height="20" viewBox="0 0 24 24"><path fill="#5f6368" d="M15 4V3H9v1H4v2h1v13c0 1.1.9 2 2 2h10c1.1 0 2-.9 2-2V6h1V4h-5zm2 15H7V6h10v13zM9 8h2v9H9zm4 0h2v9h-2z"/></svg>
<svg class="a" style="left:772.0px;top:149.5px;" width="20" height="20" viewBox="0 0 24 24"><path fill="#5f6368" d="M22 6c0-1.1-.9-2-2-2H4c-1.1 0-2 .9-2 2v12c0 1.1.9 2 2 2h16c1.1 0 2-.9 2-2V6zm-2 0l-8 5-8-5h16zm0 12H4V8l8 5 8-5v10z"/></svg>
<svg class="a" style="left:812.0px;top:149.5px;" width="20" height="20" viewBox="0 0 24 24"><path fill="#5f6368" d="M12 8c1.1 0 2-.9 2-2s-.9-2-2-2-2 .9-2 2 .9 2 2 2zm0 2c-1.1 0-2 .9-2 2s.9 2 2 2 2-.9 2-2-.9-2-2-2zm0 6c-1.1 0-2 .9-2 2s.9 2 2 2 2-.9 2-2-.9-2-2-2z"/></svg>
<svg class="a" style="left:860.0px;top:149.5px;" width="20" height="20" viewBox="0 0 24 24"><path fill="#5f6368" d="M19 6.41L17.59 5 12 10.59 6.41 5 5 6.41 10.59 12 5 17.59 6.41 19 12 13.41 17.59 19 19 17.59 13.41 12z"/></svg>
<div class="a" style="left:884px;top:183px;width:8px;height:231px;background:#dadce0;border-radius:4px"></div>
<div class="a" style="left:479px;top:192px;width:14px;height:14px;background:#7986cb;border-radius:4px"></div>
<div class="t" style="left:516.50px;top:187.68px;font-size:22px;color:#3c4043;transform:scaleX(0.9137);transform-origin:0 0;">HERRAMIENTA NECESIDADES DE</div>
<div class="t" style="left:516.50px;top:215.38px;font-size:22px;color:#3c4043;transform:scaleX(0.9900);transform-origin:0 0;">CONTRATACIÓN</div>
<div class="t" style="left:516.00px;top:246.15px;font-size:14px;color:#3c4043;letter-spacing:-0.147px;">Lunes, 23 de enero</div>
<div class="a" style="left:644.5px;top:252.5px;width:3px;height:3px;background:#3c4043;border-radius:50%"></div>
<div class="t" style="left:657.00px;top:246.15px;font-size:14px;color:#3c4043;letter-spacing:0.105px;">08:30 – 10:30</div>
<svg class="a" style="left:475.5px;top:286.0px;" width="20" height="20" viewBox="0 0 24 24"><path fill="#5f6368" d="M12 2C8.13 2 5 5.13 5 9c0 5.25 7 13 7 13s7-7.75 7-13c0-3.87-3.13-7-7-7zM7 9c0-2.76 2.24-5 5-5s5 2.24 5 5c0 2.88-2.88 7.19-5 9.88C9.92 16.21 7 11.85 7 9zM12 11.5a2.5 2.5 0 1 0 0-5 2.5 2.5 0 0 0 0 5z"/></svg>
<div class="t" style="left:516.00px;top:289.15px;font-size:14px;color:#3c4043;letter-spacing:0.403px;">https://us02web.zoom.us/w/86017624963?tk=zS6...</div>
<svg class="a" style="left:478px;top:332px" width="17" height="12" viewBox="0 0 17 12"><path d="M0 0h16v1.8H0zM0 4.6h16v1.8H0zM0 9.2h10.5v1.8H0z" fill="#5f6368"/></svg>
<div class="t" style="left:516.00px;top:321.15px;font-size:14px;color:#3c4043;letter-spacing:0.060px;">Capacitación y Certificación SERCOP is inviting you to</div>
<div class="t" style="left:516.00px;top:341.15px;font-size:14px;color:#3c4043;letter-spacing:0.049px;">a scheduled Zoom meeting.</div>
<div class="t" style="left:516.00px;top:381.15px;font-size:14px;color:#3c4043;letter-spacing:0.144px;">Join Zoom Meeting</div>
<div class="t" style="left:516.00px;top:401.15px;font-size:14px;color:#1a73e8;letter-spacing:0.521px;text-decoration:underline;">https://us02web.zoom.us/w/86017624963?</div>
<div class="t" style="left:516.00px;top:421.15px;font-size:14px;color:#1a73e8;letter-spacing:0.032px;text-decoration:underline;">tk=zS6PLV0RKbcBnLDWhVr2EfEWuWt-</div>
<div class="t" style="left:516.00px;top:441.15px;font-size:14px;color:#1a73e8;letter-spacing:-0.022px;text-decoration:underline;">oD5wPmijMG4ze4c.DQMAAAAUBwzLgxZhY1VEWmQ</div>
<div class="t" style="left:516.00px;top:461.15px;font-size:14px;color:#1a73e8;letter-spacing:-0.051px;text-decoration:underline;">wWVNnbW45VmF5Vk9WdkhRAAAAAAAAAAAAAAAA</div>
<div class="t" style="left:516.00px;top:481.15px;font-size:14px;color:#1a73e8;text-decoration:underline;">AAAAAAAAAAAAAA&amp;pwd=a0lmcnZrZGJjeGpuWGhIU</div>
<div class="t" style="left:516.00px;top:501.15px;font-size:14px;color:#1a73e8;letter-spacing:-0.318px;text-decoration:underline;">Up3bFY1dz09</div>
<div class="t" style="left:516.00px;top:541.15px;font-size:14px;color:#3c4043;letter-spacing:0.084px;">Meeting ID: 860 1762 4963</div>
<div class="t" style="left:516.00px;top:561.15px;font-size:14px;color:#3c4043;letter-spacing:0.029px;">Passcode: 123</div>
<div class="t" style="left:516.00px;top:581.15px;font-size:14px;color:#3c4043;letter-spacing:0.075px;">One tap mobile</div>
<div class="t" style="left:516.00px;top:601.15px;font-size:14px;color:#3c4043;letter-spacing:0.197px;">+12532158782,,86017624963#,,,,*123# US (Tacoma)</div>
<div class="t" style="left:516.00px;top:621.15px;font-size:14px;color:#3c4043;letter-spacing:0.170px;">+13017158592,,86017624963#,,,,*123# US</div>
<div class="t" style="left:516.00px;top:641.15px;font-size:14px;color:#3c4043;letter-spacing:0.144px;">(Washington DC)</div>
</div></div>
<div class="a" style="left:0px;top:728px;width:1360px;height:40px;background:#101010"></div>
<svg class="a" style="left:16px;top:740px" width="16" height="16" viewBox="0 0 16 16"><path fill="#fff" d="M0 2.2l6.5-.9v6.3H0zM7.3 1.2L16 0v7.6H7.3zM0 8.4h6.5v6.3L0 13.8zM7.3 8.4H16V16l-8.7-1.2z"/></svg>
<svg class="a" style="left:63px;top:739px" width="18" height="18" viewBox="0 0 18 18"><circle cx="11.5" cy="6.5" r="5.5" stroke="#fff" stroke-width="1.2" fill="none"/><path d="M7.6 10.4L1.3 16.7" stroke="#fff" stroke-width="1.3"/></svg>
<svg class="a" style="left:110px;top:735px" width="25" height="25" viewBox="0 0 24 24"><defs><linearGradient id="eg" x1="0" y1="1" x2="1" y2="0"><stop offset="0" stop-color="#0c59a4"/><stop offset=".45" stop-color="#1b8ee0"/><stop offset=".75" stop-color="#35c1f1"/><stop offset="1" stop-color="#66eb6e"/></linearGradient></defs><path d="M12 1C5.9 1 1 5.9 1 12s4.9 11 11 11c4 0 7.5-2.1 9.4-5.3-1.3.7-2.8 1.1-4.4 1.1-4.2 0-7.5-3-7.5-6.5 0-1.9 1.3-3.4 3.2-3.4 2.3 0 3.6 1.6 3.6 3.2 0 .6-.2 1.1-.5 1.5 3.6 0 6.2-2 6.2-4.8C22 4.6 17.5 1 12 1z" fill="url(#eg)"/></svg>
<svg class="a" style="left:160px;top:736px" width="24" height="24" viewBox="0 0 24 24"><path d="M12 6.25H21.96A11.5 11.5 0 0 0 2.04 6.25L7.02 14.875A5.75 5.75 0 0 1 12 6.25Z" fill="#db4437"/><path d="M12 6.25H21.96A11.5 11.5 0 0 0 2.04 6.25L7.02 14.875A5.75 5.75 0 0 1 12 6.25Z" fill="#ffcd40" transform="rotate(120 12 12)"/><path d="M12 6.25H21.96A11.5 11.5 0 0 0 2.04 6.25L7.02 14.875A5.75 5.75 0 0 1 12 6.25Z" fill="#0f9d58" transform="rotate(240 12 12)"/><circle cx="12" cy="12" r="5.75" fill="#fff"/><circle cx="12" cy="12" r="4.6" fill="#4285f4"/></svg>
<svg class="a" style="left:208px;top:736px" width="24" height="23" viewBox="0 0 24 23"><rect x="5" y="0" width="19" height="23" rx="1.5" fill="#41a5ee"/><rect x="5" y="7" width="19" height="8" fill="#2b7cd3"/><rect x="5" y="15" width="19" height="8" fill="#185abd"/><rect x="0" y="4.5" width="13" height="13" rx="1" fill="#185abd"/><path d="M2.5 7.5l1.6 7 1.8-5.5 1.7 5.5 1.8-7" stroke="#fff" stroke-width="1.3" fill="none"/></svg>
<svg class="a" style="left:257px;top:737px" width="24" height="21" viewBox="0 0 24 21"><path d="M0 2a1 1 0 0 1 1-1h7l2 2h13a1 1 0 0 1 1 1v15a1 1 0 0 1-1 1H1a1 1 0 0 1-1-1z" fill="#e2a720"/><rect x="0" y="6" width="24" height="14" rx="1" fill="#ffc83d"/><rect x="6" y="12" width="12" height="8" fill="#1e88d8"/><rect x="9" y="14" width="6" height="6" fill="#ffc83d"/></svg>
<svg class="a" style="left:306px;top:736px" width="24" height="23" viewBox="0 0 24 23"><rect x="5" y="0" width="19" height="23" rx="1.5" fill="#21a366"/><rect x="5" y="7" width="19" height="8" fill="#107c41"/><rect x="5" y="15" width="19" height="8" fill="#185c37"/><rect x="14" y="0" width="10" height="7" fill="#33c481"/><rect x="0" y="4.5" width="13" height="13" rx="1" fill="#107c41"/><path d="M3.5 7.5l5.5 7M9 7.5l-5.5 7" stroke="#fff" stroke-width="1.5"/></svg>
<svg class="a" style="left:355px;top:735px" width="25" height="25" viewBox="0 0 24 24"><defs><radialGradient id="ffg" cx=".3" cy=".2" r="1"><stop offset="0" stop-color="#fff44f"/><stop offset=".35" stop-color="#ff980e"/><stop offset=".7" stop-color="#ff3647"/><stop offset="1" stop-color="#e31587"/></radialGradient></defs><path d="M22.5 8.5c-.6-1.5-1.7-3-2.7-3.6.6 1.2 1 2.4 1.1 3.3-1.2-3-3.3-4.3-5-7C13.9 2.6 12 4 12 4 8 3.5 5.2 5.5 4 7.6c-.5-.6-.6-1.8-.6-2.3C1.7 7.3 1 10 1 12.5 1 18.6 6 23.5 12 23.5s11-4.9 11-11c0-1.4-.2-2.8-.5-4z" fill="url(#ffg)"/><circle cx="12" cy="13.5" r="6" fill="#7542e5"/><path d="M6 13c.5-3 3-5 6-5 2.5 0 4 1 5 2.5-1.5-.5-3-.3-4.5.5-2 1-4 3-6.5 2z" fill="#ff980e"/></svg>
<div class="a" style="left:393px;top:728px;width:48px;height:40px;background:#3a3a3a"></div>
<svg class="a" style="left:405px;top:736px" width="24" height="24" viewBox="0 0 24 24"><path d="M12 6.25H21.96A11.5 11.5 0 0 0 2.04 6.25L7.02 14.875A5.75 5.75 0 0 1 12 6.25Z" fill="#db4437"/><path d="M12 6.25H21.96A11.5 11.5 0 0 0 2.04 6.25L7.02 14.875A5.75 5.75 0 0 1 12 6.25Z" fill="#ffcd40" transform="rotate(120 12 12)"/><path d="M12 6.25H21.96A11.5 11.5 0 0 0 2.04 6.25L7.02 14.875A5.75 5.75 0 0 1 12 6.25Z" fill="#0f9d58" transform="rotate(240 12 12)"/><circle cx="12" cy="12" r="5.75" fill="#fff"/><circle cx="12" cy="12" r="4.6" fill="#4285f4"/></svg>
<div class="a" style="left:419px;top:749px;width:12px;height:12px;border-radius:50%;background:radial-gradient(circle,#333 0 2px,#aaa 3px,#eee 5px)"></div>
<svg class="a" style="left:452px;top:734px" width="26" height="26" viewBox="0 0 26 26"><path d="M13 3C6.5 3 1.5 7.5 1.5 13c0 4 2.5 7 6 8 2 .6 2.5-1 2-2.5-.7-1.8.5-3 2.5-3 3 0 4 .5 6 0 3.5-1 6-3.5 6-6.5C24 7 19 3 13 3z" fill="#f2e3c6"/><circle cx="6.5" cy="12" r="1.8" fill="#2e7bd6"/><circle cx="9" cy="7.5" r="1.8" fill="#43a047"/><circle cx="14" cy="6.5" r="1.8" fill="#e53935"/><path d="M25 1l-8 12-2 3 1 1 2.5-2L26 3z" fill="#7b5a2a"/></svg>
<div class="a" style="left:393px;top:766px;width:48px;height:2px;background:#76b9ed"></div>
<div class="a" style="left:446px;top:766px;width:40px;height:2px;background:#76b9ed"></div>
<svg class="a" style="left:1116px;top:743px" width="13" height="8" viewBox="0 0 13 8"><path d="M.7 7.3L6.5 1.3l5.8 6" stroke="#fff" stroke-width="1.2" fill="none"/></svg>
<svg class="a" style="left:1139px;top:739px" width="16" height="17" viewBox="0 0 16 17"><rect x="1" y="4" width="11" height="9" rx="3" stroke="#fff" stroke-width="1.1" fill="none"/><path d="M12 7l3-1.5v6L12 10M4 16h5M6.5 13v3M4 1.5h5" stroke="#fff" stroke-width="1.1" fill="none"/></svg>
<svg class="a" style="left:1162px;top:739px" width="18" height="17" viewBox="0 0 18 17"><rect x="4.5" y="3.5" width="13" height="9" stroke="#fff" stroke-width="1.1" fill="none"/><path d="M11 12.5v3M7.5 15.5h7M.5 1.5h4v12h-4z" stroke="#fff" stroke-width="1.1" fill="none"/></svg>
<svg class="a" style="left:1185px;top:739px" width="19" height="17" viewBox="0 0 19 17"><path d="M1 6h3l4.5-4v13L4 11H1z" stroke="#fff" stroke-width="1.1" fill="none"/><path d="M11 6c1 1.3 1 3.7 0 5M13.5 4c2 2.5 2 6.5 0 9M16 2c3 3.5 3 9.5 0 13" stroke="#fff" stroke-width="1.1" fill="none"/></svg>
<div class="t" style="left:1214.50px;top:741.34px;font-size:12px;color:#fff;letter-spacing:-1.337px;">ESP</div>
<div class="t" style="left:1261.00px;top:732.84px;font-size:12px;color:#fff;letter-spacing:-0.228px;">11:00</div>
<div class="t" style="left:1248.50px;top:750.84px;font-size:12px;color:#fff;letter-spacing:-0.043px;">23/1/2023</div>
<svg class="a" style="left:1319px;top:740px" width="17" height="17" viewBox="0 0 17 17"><path d="M.6.6h15.8v11.8H11l-2.5 3-2.5-3H.6z" stroke="#fff" stroke-width="1.1" fill="none"/></svg>
<div class="a" style="left:1355px;top:728px;width:1px;height:40px;background:#4a4a4a"></div>
</body></html>
